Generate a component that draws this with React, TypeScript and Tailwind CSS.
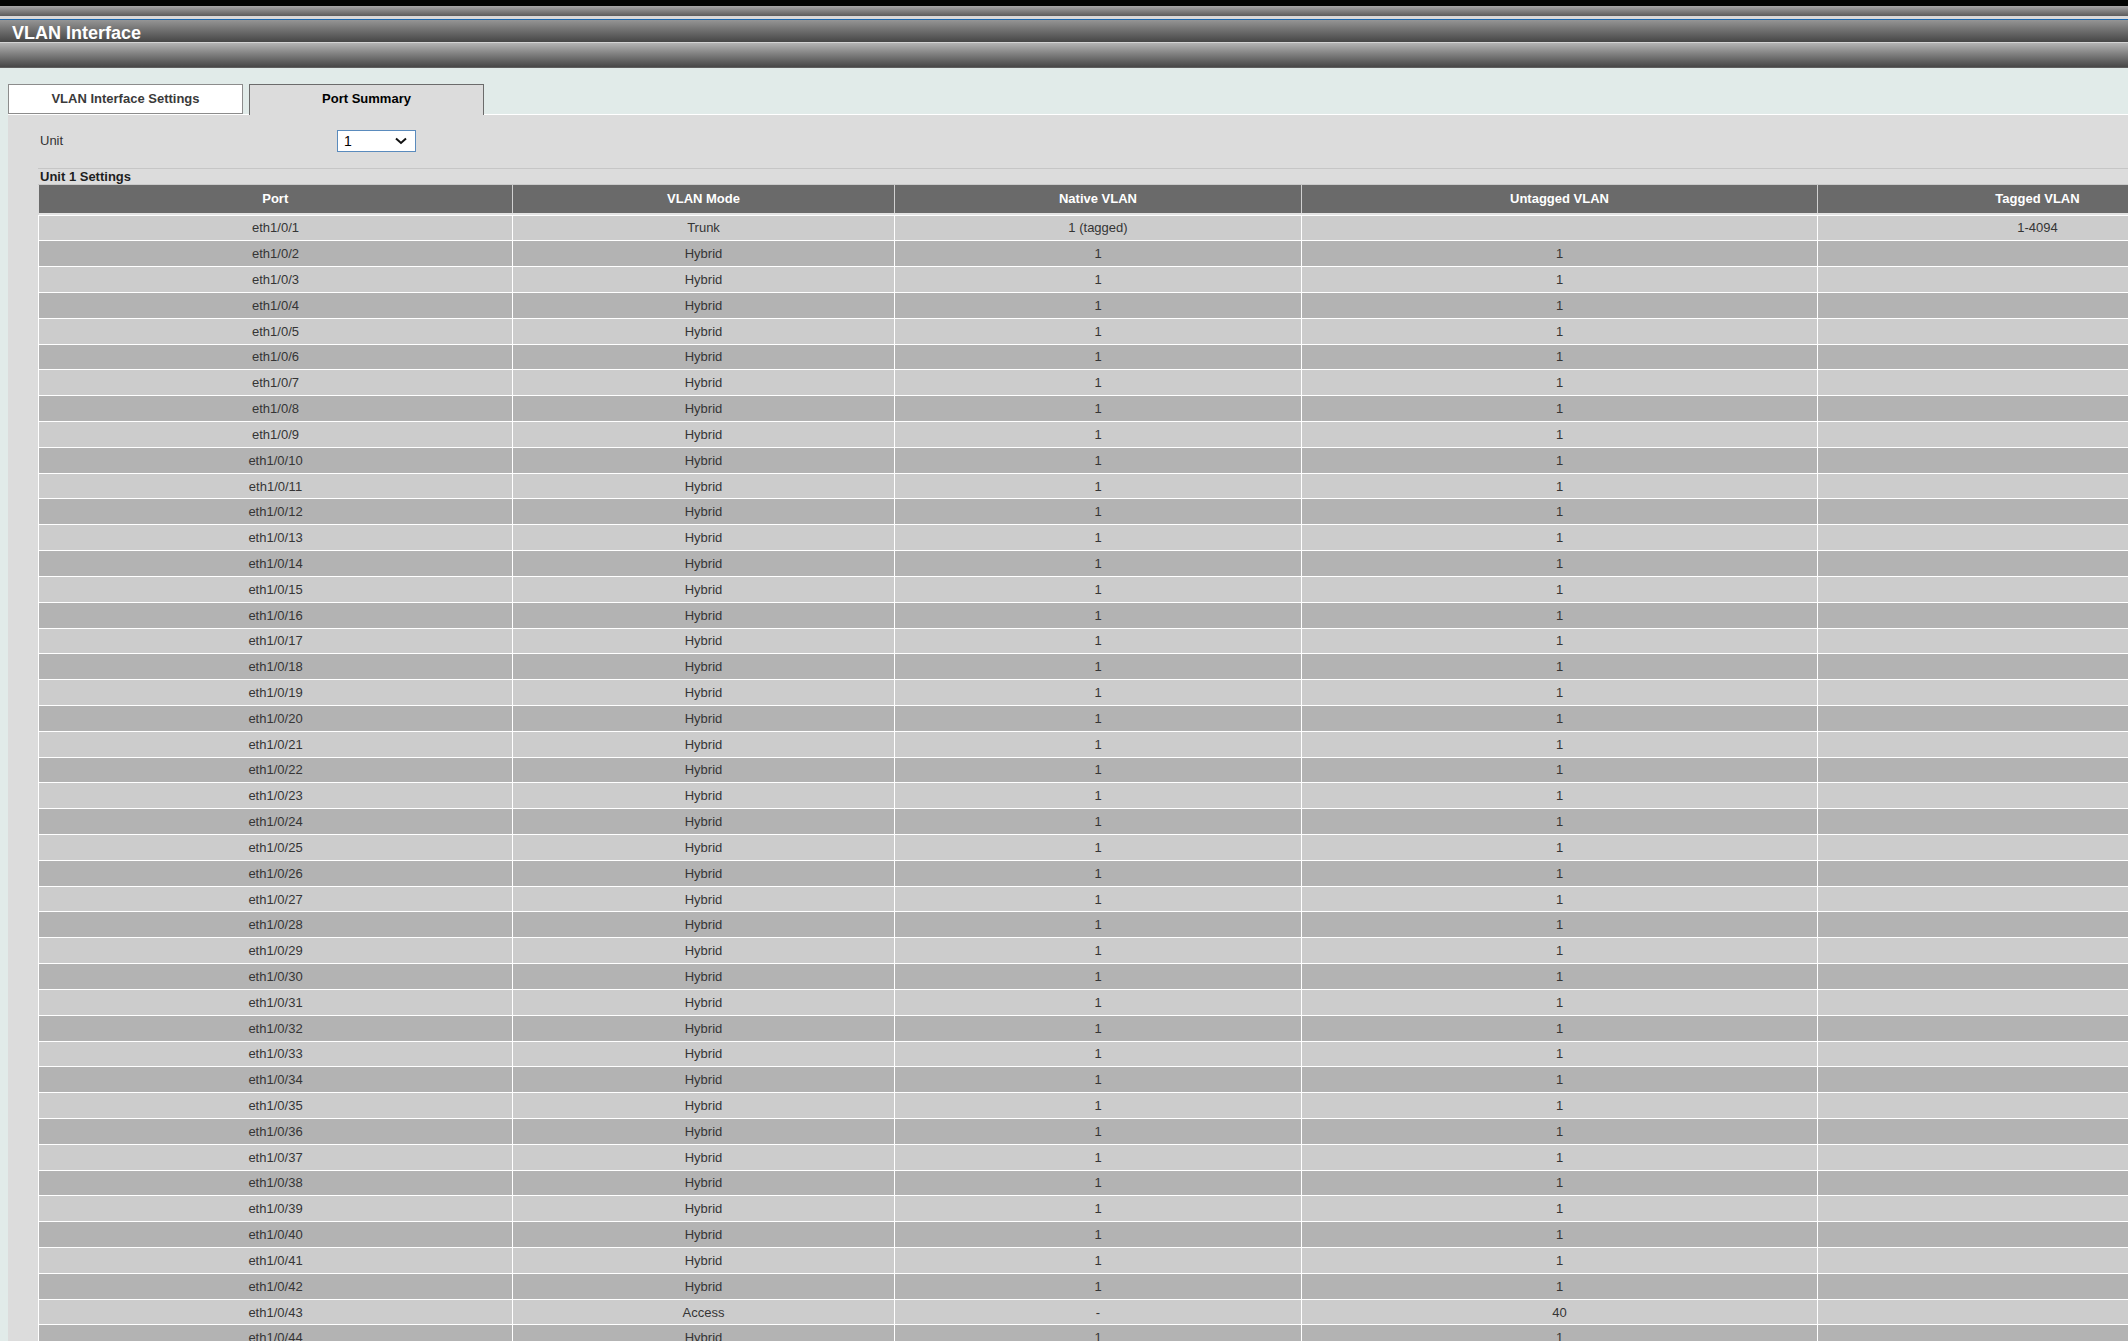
import React from 'react'

type Row = { port: string; mode: string; native: string; untagged: string; tagged: string }

const rows: Row[] = Array.from({ length: 48 }, (_, i) => {
  const n = i + 1
  const port = `eth1/0/${n}`
  if (n === 1) return { port, mode: 'Trunk', native: '1 (tagged)', untagged: '', tagged: '1-4094' }
  if (n === 43) return { port, mode: 'Access', native: '-', untagged: '40', tagged: '' }
  return { port, mode: 'Hybrid', native: '1', untagged: '1', tagged: '' }
})

const columns = [
  { label: 'Port', width: 474 },
  { label: 'VLAN Mode', width: 382 },
  { label: 'Native VLAN', width: 407 },
  { label: 'Untagged VLAN', width: 516 },
  { label: 'Tagged VLAN', width: 440 },
]

function Chevron() {
  return (
    <svg width="12" height="8" viewBox="0 0 12 8" fill="none">
      <polyline points="1,1.5 6,6 11,1.5" stroke="#111" strokeWidth="2" />
    </svg>
  )
}

export default function App() {
  return (
    <div className="h-[1341px] w-[2128px] overflow-hidden bg-[#e1ebe9] font-['Liberation_Sans',Arial,sans-serif]">
      {/* top chrome */}
      <div className="h-[6px] bg-[#030503]" />
      <div className="h-[10px] bg-gradient-to-b from-[#a8a8a8] to-[#5c5c5c]" />
      <div className="h-[3px] bg-[#d9d9d9]" />
      <div className="h-px bg-[#1b67ad]" />
      <div className="flex h-[22px] items-center bg-gradient-to-b from-[#959595] to-[#474747] pl-[12px] pt-[4px]">
        <span className="text-[18px] font-bold leading-none text-white">VLAN Interface</span>
      </div>
      <div className="h-px bg-[#d4d4d4]" />
      <div className="h-[24px] bg-gradient-to-b from-[#b4b4b4] to-[#474747]" />
      <div className="h-px bg-[#5e5e5e]" />

      {/* tabs */}
      <div className="flex h-[46px] items-end gap-[6px] pl-[8px]">
        <div className="flex h-[30px] w-[235px] items-center justify-center border border-[#8c8c8c] bg-white text-[13px] font-bold text-[#3a3a3a]">
          VLAN Interface Settings
        </div>
        <div className="relative z-10 -mb-px flex h-[31px] w-[235px] items-center justify-center border border-b-0 border-[#6b6b6b] bg-[#dcdcdc] pb-[2px] text-[13px] font-bold text-black">
          Port Summary
        </div>
      </div>

      {/* panel */}
      <div className="ml-[8px] h-full border-t border-white bg-[#dcdcdc]">
        <div className="mt-[15px] flex h-[22px] items-center pl-[32px]">
          <span className="w-[297px] text-[13px] text-[#333]">Unit</span>
          <div className="flex h-[22px] w-[79px] items-center justify-between border border-[#5a8bbd] bg-white pl-[6px] pr-[8px] text-[14px] text-black">
            <span>1</span>
            <Chevron />
          </div>
        </div>

        <div className="ml-[30px] mt-[16px]">
          <div className="flex h-[16px] items-center border-t border-[#c6c6c6] pl-[2px] text-[13px] font-bold text-[#1e1e1e]">
            Unit 1 Settings
          </div>
          <div className="h-px bg-[#c9c9c9]" />
          <table className="table-fixed border-collapse text-[13px]" style={{ width: 2219 }}>
            <colgroup>
              {columns.map((c) => (
                <col key={c.label} style={{ width: c.width }} />
              ))}
            </colgroup>
            <thead>
              <tr className="h-[28px] bg-[#6a6a6a]">
                {columns.map((c) => (
                  <th key={c.label} className="border-x border-[#d0d0d0] p-0 text-center font-bold text-white first:border-l-0">
                    {c.label}
                  </th>
                ))}
              </tr>
            </thead>
            <tbody>
              <tr className="h-[2px] bg-[#e4e4e4]">
                <td colSpan={5} className="p-0" />
              </tr>
              {rows.map((r, i) => (
                <tr
                  key={r.port}
                  className={`h-[25.82px] ${i % 2 === 0 ? 'bg-[#cccccc]' : 'bg-[#b3b3b3]'}`}
                >
                  {[r.port, r.mode, r.native, r.untagged, r.tagged].map((v, j) => (
                    <td key={j} className="border border-white p-0 text-center leading-none text-[#353535]">
                      {v}
                    </td>
                  ))}
                </tr>
              ))}
            </tbody>
          </table>
        </div>
      </div>
    </div>
  )
}
